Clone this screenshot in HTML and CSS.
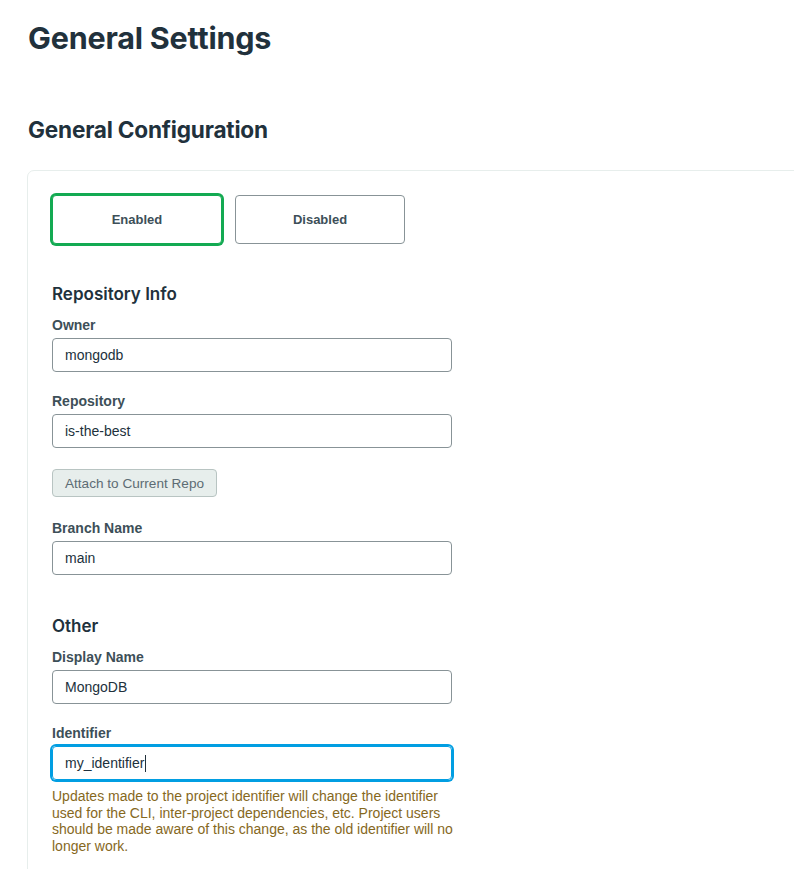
FILE: index.html
```html
<!DOCTYPE html>
<html lang="en">
<head>
<meta charset="utf-8">
<title>General Settings</title>
<link rel="stylesheet" href="styles.css">
</head>
<body>
<div class="page">
  <h1 class="page-title">General Settings</h1>
  <h2 class="section-title">General Configuration</h2>
  <div class="card">
    <div class="toggle-row">
      <button class="toggle toggle-active" type="button">Enabled</button>
      <button class="toggle" type="button">Disabled</button>
    </div>

    <h3 class="group-title group-first">Repository Info</h3>
    <div class="field">
      <label class="field-label">Owner</label>
      <div class="text-input">mongodb</div>
    </div>
    <div class="field">
      <label class="field-label">Repository</label>
      <div class="text-input">is-the-best</div>
    </div>
    <button class="secondary-btn" type="button">Attach to Current Repo</button>
    <div class="field">
      <label class="field-label">Branch Name</label>
      <div class="text-input">main</div>
    </div>

    <h3 class="group-title group-next">Other</h3>
    <div class="field">
      <label class="field-label">Display Name</label>
      <div class="text-input">MongoDB</div>
    </div>
    <div class="field field-last">
      <label class="field-label">Identifier</label>
      <div class="text-input text-input-focus">my_identifier<span class="caret"></span></div>
      <p class="help-text">Updates made to the project identifier will change the identifier used for the CLI, inter-project dependencies, etc. Project users should be made aware of this change, as the old identifier will no longer work.</p>
    </div>
  </div>
</div>
</body>
</html>
```

FILE: styles.css
```css
html, body {
  margin: 0;
  padding: 0;
  background: #ffffff;
  overflow: hidden;
}

body {
  font-family: "Liberation Sans", Arial, sans-serif;
  color: #21313c;
}

.page {
  padding-left: 27px;
}

.page-title {
  font-family: "Inter", "Liberation Sans", sans-serif;
  font-weight: 700;
  font-size: 30.5px;
  line-height: 36px;
  margin: 20px 0 0 1px;
  color: #21313c;
  letter-spacing: -0.2px;
}

.section-title {
  font-family: "Inter", "Liberation Sans", sans-serif;
  font-weight: 700;
  font-size: 22.6px;
  line-height: 28px;
  margin: 60px 0 26px 1px;
  color: #21313c;
  letter-spacing: -0.2px;
}

.card {
  border: 1px solid #e7eeec;
  border-radius: 7px;
  margin-right: -60px;
  padding: 24px 24px 40px 24px;
  min-height: 700px;
}

.toggle-row {
  display: flex;
  gap: 13px;
}

.toggle {
  width: 170px;
  height: 49px;
  box-sizing: border-box;
  border: 1px solid #889397;
  border-radius: 4px;
  background: #ffffff;
  font-family: "Liberation Sans", Arial, sans-serif;
  font-weight: 700;
  font-size: 13px;
  color: #3d4f58;
  padding: 0;
}

.toggle-active {
  border-color: #13aa52;
  box-shadow: 0 0 0 2px #13aa52;
}

.group-title {
  font-family: "Inter", "Liberation Sans", sans-serif;
  font-weight: 600;
  font-size: 17px;
  line-height: 24px;
  color: #21313c;
  margin: 0;
}

.group-first {
  margin-top: 38px;
  margin-bottom: 11px;
}

.group-next {
  margin-top: 39px;
  margin-bottom: 11px;
}

.field {
  margin-bottom: 21px;
}

.field-last {
  margin-bottom: 0;
}

.field-label {
  display: block;
  font-weight: 700;
  font-size: 14px;
  line-height: 16px;
  color: #3d4f58;
  margin-bottom: 5px;
}

.text-input {
  width: 400px;
  height: 34px;
  box-sizing: border-box;
  border: 1px solid #889397;
  border-radius: 4px;
  padding: 0 12px;
  font-size: 14px;
  line-height: 32px;
  color: #21313c;
  display: flex;
  align-items: center;
}

.text-input-focus {
  border-color: #019ee2;
  box-shadow: 0 0 0 2px #019ee2;
}

.caret {
  display: inline-block;
  width: 1px;
  height: 17px;
  background: #21313c;
  margin-left: 1px;
}

.secondary-btn {
  display: block;
  height: 28px;
  box-sizing: border-box;
  padding: 0 12px;
  border: 1px solid #b8c4c2;
  border-radius: 4px;
  background: #e7eeec;
  color: #5d6c74;
  font-family: "Liberation Sans", Arial, sans-serif;
  font-size: 13.6px;
  margin: 0 0 23px 0;
}

.help-text {
  width: 410px;
  margin: 8px 0 0 0;
  font-size: 14px;
  line-height: 16.67px;
  color: #86681d;
}
```
